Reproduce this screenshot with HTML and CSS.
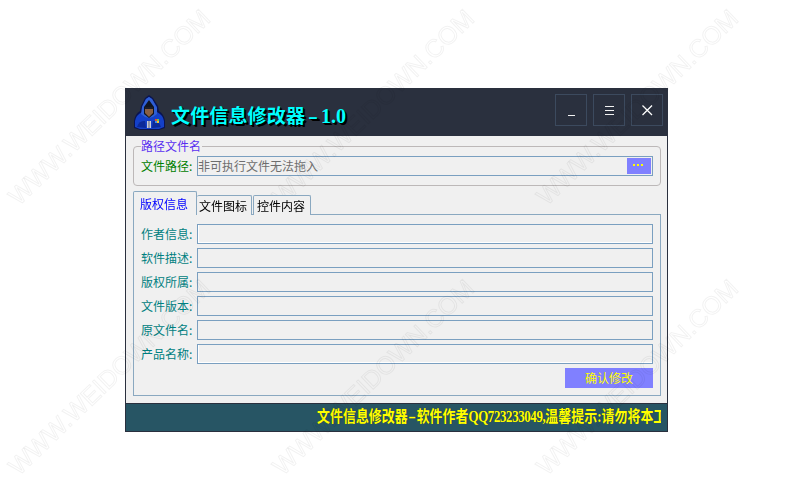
FILE: index.html
```html
<!DOCTYPE html>
<html lang="zh-CN">
<head>
<meta charset="utf-8">
<title>文件信息修改器</title>
<link rel="stylesheet" href="styles.css">
</head>
<body>
<main class="window">
  <header class="titlebar">
    <svg class="logo" width="32" height="36" viewBox="0 0 32 36">
      <path d="M16 1 L20 4 L25 12 L26 17 Q31 20 32 27 L32 34 L26 36 L7 36 L1 34 L1 27 Q2 20 7 17 L8 12 L12 4 Z" fill="#0a1450"/>
      <path d="M16 3 L19 5 L24 13 L24 18 Q30 21 31 27 L31 33 L26 35 L7 35 L2 33 L2 27 Q3 21 9 18 L9 13 L13 5 Z" fill="#1440c8"/>
      <path d="M16 3 L19 5 L24 14 L24 20 L20 23 L16 24 L12 23 L8 20 L9 13 L13 5 Z" fill="#2f5fd4"/>
      <path d="M16 6 L21 13 L21 20 L16 24 L11 20 L11 13 Z" fill="#101420"/>
      <path d="M12 14 L20 14 L20 19 L16 23 L12 19 Z" fill="#8a5f42"/>
      <rect x="12" y="13" width="8" height="2" fill="#1c1c26"/>
      <path d="M4 33 Q6 26 12 27 L13 34 Z" fill="#0c2a98"/>
      <path d="M28 33 Q26 26 20 27 L19 34 Z" fill="#0c2a98"/>
      <rect x="14" y="27" width="4" height="7" fill="#c8ccd8"/>
      <rect x="15.5" y="27" width="1" height="7" fill="#5a6078"/>
      <rect x="22" y="25" width="2" height="2" fill="#e84a2a"/>
      <rect x="24" y="25" width="2" height="2" fill="#6cc04a"/>
      <rect x="22" y="27" width="2" height="2" fill="#3a8ae8"/>
      <rect x="24" y="27" width="2" height="2" fill="#f0c030"/>
    </svg>
    <h1 class="app-title">文件信息修改器<span class="version"><span class="dash">-</span>1.0</span></h1>
    <div class="win-controls">
      <button class="win-btn" type="button" aria-label="最小化">
        <svg width="30" height="30" viewBox="0 0 30 30"><path d="M12 20.5 H19" stroke="#f2f2f2" fill="none"/></svg>
      </button>
      <button class="win-btn" type="button" aria-label="菜单">
        <svg width="30" height="30" viewBox="0 0 30 30"><path d="M11 11.5 H20 M11 15.5 H20 M11 19.5 H20" stroke="#f2f2f2" fill="none"/></svg>
      </button>
      <button class="win-btn" type="button" aria-label="关闭">
        <svg width="30" height="30" viewBox="0 0 30 30"><path d="M10.5 10.5 L20 20 M20 10.5 L10.5 20" stroke="#ffffff" stroke-width="1.3" fill="none"/></svg>
      </button>
    </div>
  </header>

  <div class="content">
    <fieldset class="group">
      <legend class="group-title">路径文件名</legend>
      <div class="row">
        <label class="label label-green">文件路径:</label>
        <div class="field field-path">
          <span class="placeholder">非可执行文件无法拖入</span>
          <button class="browse" type="button" aria-label="浏览">
            <svg width="24" height="16" viewBox="0 0 24 16"><path d="M6 6h2v2H6z M10 6h2v2h-2z M14 6h2v2h-2z" fill="#ffff00"/></svg>
          </button>
        </div>
      </div>
    </fieldset>

    <nav class="tabs">
      <span class="tab tab-active">版权信息</span>
      <span class="tab tab-second">文件图标</span>
      <span class="tab tab-third">控件内容</span>
    </nav>

    <section class="panel">
      <div class="row"><label class="label">作者信息:</label><div class="field field-lit"></div></div>
      <div class="row"><label class="label">软件描述:</label><div class="field"></div></div>
      <div class="row"><label class="label">版权所属:</label><div class="field"></div></div>
      <div class="row"><label class="label">文件版本:</label><div class="field"></div></div>
      <div class="row"><label class="label">原文件名:</label><div class="field"></div></div>
      <div class="row"><label class="label">产品名称:</label><div class="field field-lit"></div></div>
      <div class="actions"><button class="confirm" type="button">确认修改</button></div>
    </section>
  </div>

  <footer class="ticker">
    <div class="ticker-clip"><span class="ticker-text">文件信息修改器<span class="ticker-dash">-</span>软件作者<span class="ticker-latin">QQ723233049,</span>温馨提示:请勿将本工具</span></div>
  </footer>
</main>

<div class="watermarks" aria-hidden="true">
  <div class="mark-grid">
    <span class="mark">WWW.WEIDOWN.COM</span>
    <span class="mark">WWW.WEIDOWN.COM</span>
    <span class="mark">WWW.WEIDOWN.COM</span>
    <span class="mark">WWW.WEIDOWN.COM</span>
    <span class="mark">WWW.WEIDOWN.COM</span>
    <span class="mark">WWW.WEIDOWN.COM</span>
  </div>
</div>
</body>
</html>
```

FILE: styles.css
```css
* { box-sizing: border-box; }

html, body { height: 100%; }

body {
  margin: 0;
  padding: 88px 0 0 125px;
  background: #ffffff;
  overflow: hidden;
  font-family: "Noto Sans CJK SC", "Liberation Sans", sans-serif;
  font-size: 12px;
}

.window {
  width: 543px;
  height: 344px;
  display: flex;
  flex-direction: column;
  background: #f0f0f0;
  border: solid #2a303e;
  border-width: 0 1px 1px 1px;
}

.titlebar {
  height: 48px;
  margin: 0 -1px;
  flex: none;
  display: flex;
  align-items: flex-start;
  background: #2a303e;
}

.logo {
  margin: 6px 0 0 8px;
  flex: none;
}

.app-title {
  margin: 13px 0 0 6px;
  font-family: "Liberation Serif", "Noto Sans CJK SC", serif;
  font-size: 19px;
  letter-spacing: 0.15px;
  line-height: 30px;
  font-weight: 700;
  color: #00ffff;
  text-shadow: 1px 1px 0 #000000, 2px 2px 0 #000000;
  white-space: nowrap;
}

.version {
  font-size: 20px;
  letter-spacing: 0;
}

.dash {
  display: inline-block;
  width: 16px;
  text-align: center;
  transform: scaleX(1.5);
}

.win-controls {
  margin: 6px 5px 0 auto;
  display: flex;
  gap: 6px;
}

.win-btn {
  width: 32px;
  height: 32px;
  padding: 0;
  display: block;
  background: transparent;
  border: 1px solid #3c4a5e;
}

.win-btn svg { display: block; }

.content {
  flex: 1;
  min-height: 0;
  padding: 3px 6px 0 7px;
  display: flex;
  flex-direction: column;
}

.group {
  height: 47px;
  margin: 0;
  padding: 3px 7px 0 7px;
  border: 1px solid #bcb8b8;
  border-radius: 4px;
  min-width: 0;
}

.group-title {
  padding: 0 1px 0 0;
  margin-left: 0;
  color: #5a30f0;
  font-size: 12px;
  line-height: 14px;
}

.row {
  height: 20px;
  margin-bottom: 4px;
  display: flex;
  align-items: center;
}

.label {
  width: 56px;
  flex: none;
  color: #008080;
  font-size: 12px;
  line-height: 20px;
  white-space: nowrap;
}

.label-green { color: #008000; }

.field {
  flex: 1;
  height: 20px;
  min-width: 0;
  background: #f0f0f0;
  border: 1px solid #7a9fc0;
}

.field-lit {
  box-shadow: inset 0 -1px 0 #ffffff, inset 1px 0 0 #ffffff;
}

.field-path {
  display: flex;
  align-items: center;
  padding: 0 1px 0 0;
}

.placeholder {
  flex: 1;
  color: #6e6e6e;
  font-size: 12px;
  line-height: 18px;
}

.browse {
  width: 24px;
  height: 16px;
  padding: 0;
  border: 0;
  background: #8080ff;
  display: block;
}

.browse svg { display: block; }

.tabs {
  height: 23px;
  margin-top: 6px;
  flex: none;
  display: flex;
  align-items: flex-end;
  position: relative;
  z-index: 1;
  margin-bottom: -1px;
}

.tab {
  height: 20px;
  display: flex;
  align-items: center;
  justify-content: center;
  background: #f0f0f0;
  border: 1px solid #8aa8c0;
  border-bottom: 0;
  border-radius: 2px 2px 0 0;
  color: #000000;
  font-size: 12px;
  line-height: 18px;
}

.tab-active {
  width: 64px;
  height: 24px;
  padding-right: 2px;
  color: #0000ff;
}

.tab-second { width: 55px; border-left: 0; padding-right: 2px; }

.tab-third { width: 58px; margin-left: 1px; padding-right: 2px; }

.panel {
  height: 182px;
  flex: none;
  padding: 9px 7px 0 7px;
  border: 1px solid #8aa8c0;
}

.actions {
  display: flex;
  justify-content: flex-end;
}

.confirm {
  width: 88px;
  height: 20px;
  padding: 0;
  border: 0;
  background: #8080ff;
  color: #ffff00;
  font-family: "Noto Sans CJK SC", sans-serif;
  font-size: 12px;
  line-height: 20px;
}

.ticker {
  height: 29px;
  flex: none;
  margin: 0 -1px -1px;
  padding: 0 6px 1px 191px;
  display: flex;
  align-items: center;
  background: #275564;
  border: solid #2a303e;
  border-width: 1px;
}

.ticker-clip {
  flex: 1;
  min-width: 0;
  overflow: hidden;
}

.ticker-text {
  display: block;
  color: #ffff00;
  font-family: "Liberation Serif", "Noto Sans CJK SC", serif;
  font-size: 16px;
  line-height: 20px;
  font-weight: 700;
  white-space: nowrap;
  width: max-content;
  text-shadow: 1px 0 0 #1c3a30;
  transform: scaleX(0.81);
  transform-origin: left center;
}

.ticker-dash {
  display: inline-block;
  width: 11px;
  text-align: center;
  transform: scaleX(1.8);
}

.ticker-latin { letter-spacing: -0.5px; }

.watermarks {
  position: fixed;
  inset: 0;
  overflow: hidden;
  pointer-events: none;
}

.mark-grid {
  margin: -28px 0 0 -23px;
  display: grid;
  grid-template-columns: repeat(3, 264px);
  grid-auto-rows: 270px;
}

.mark {
  display: flex;
  align-items: center;
  justify-content: center;
  font-family: "Liberation Sans", sans-serif;
  font-size: 25px;
  color: transparent;
  -webkit-text-stroke: 1px rgba(0, 0, 0, 0.055);
  transform: rotate(-44deg);
  white-space: nowrap;
}
```
